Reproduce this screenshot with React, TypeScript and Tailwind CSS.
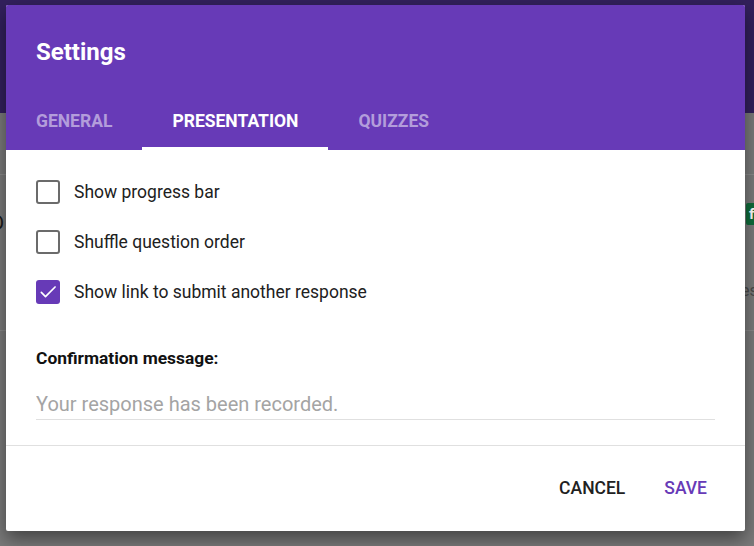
import { useState } from 'react';

const font = { fontFamily: 'Roboto, "Liberation Sans", sans-serif' };

function Checkbox({ checked }: { checked: boolean }) {
  if (checked) {
    return (
      <span className="flex h-[24px] w-[24px] items-center justify-center rounded-[3px] bg-[#673ab7]">
        <svg width="20" height="20" viewBox="0 0 24 24" fill="none">
          <path d="M4 12.5l5 5L20.5 6" stroke="#fff" strokeWidth="2" strokeLinecap="round" strokeLinejoin="round" />
        </svg>
      </span>
    );
  }
  return <span className="block h-[24px] w-[24px] rounded-[3px] border-2 border-[#6b6b6b]" />;
}

export default function App() {
  const [tab] = useState('PRESENTATION');
  const [opts, setOpts] = useState([
    { label: 'Show progress bar', checked: false },
    { label: 'Shuffle question order', checked: false },
    { label: 'Show link to submit another response', checked: true },
  ]);

  const toggle = (i: number) =>
    setOpts((prev) => prev.map((o, j) => (j === i ? { ...o, checked: !o.checked } : o)));

  return (
    <div className="relative h-[546px] w-[754px] overflow-hidden bg-[#7a7a7a]" style={font}>
      {/* dimmed page behind the dialog */}
      <div className="h-[113px] bg-[#32205c]" />
      <div className="mt-[61px] h-px bg-[#8a8a8a]" />
      <div className="mt-[155px] h-px bg-[#888]" />
      <span className="absolute left-[-9px] top-[208px] text-[20px] text-[#1a1a1a]">D</span>
      <span className="absolute left-[746px] top-[203px] flex h-[22px] w-[20px] items-center rounded-[2px] bg-[#0f6b3a] pl-[3px] text-[15px] font-bold text-white">
        f
      </span>
      <span className="absolute left-[741px] top-[279px] text-[16px] text-[#4a4a4a]">es</span>

      {/* dialog */}
      <div className="absolute left-[6px] top-[5px] flex h-[526px] w-[739px] flex-col overflow-hidden rounded-[2px] bg-white shadow-[0_8px_18px_rgba(0,0,0,0.45)]">
        <div className="bg-[#673ab7]">
          <div className="flex h-[90px] items-center pl-[30px] pt-[4px] text-[24px] font-bold text-white">Settings</div>
          <div className="flex h-[55px]">
            {['GENERAL', 'PRESENTATION', 'QUIZZES'].map((t) => (
              <div
                key={t}
                className={
                  t === tab
                    ? 'flex items-center border-b-[3px] border-white px-[30px] text-[17.5px] font-bold text-white'
                    : 'flex items-center border-b-[3px] border-transparent px-[30px] text-[17.5px] font-bold text-[#b39ddb]'
                }
              >
                {t}
              </div>
            ))}
          </div>
        </div>

        <div className="px-[30px] pt-[17px]">
          {opts.map((o, i) => (
            <div key={o.label} className="flex h-[50px] cursor-pointer items-center gap-[14px]" onClick={() => toggle(i)}>
              <Checkbox checked={o.checked} />
              <span className="text-[17.5px] text-[#212121]">{o.label}</span>
            </div>
          ))}

          <div className="mt-[31px] h-[20px] text-[17.4px] font-bold leading-[20px] text-[#111]">Confirmation message:</div>
          <input
            className="mt-[20px] block h-[32px] w-full border-b border-[#e0e0e0] text-[20px] text-[#212121] outline-none placeholder:text-[#a4a4a4]"
            placeholder="Your response has been recorded."
          />
        </div>

        <div className="mt-[25px] flex flex-1 items-center justify-end gap-[39px] border-t border-[#e0e0e0] pr-[38px]">
          <button className="text-[17.5px] font-medium text-[#212121]">CANCEL</button>
          <button className="text-[17.5px] font-medium text-[#673ab7]">SAVE</button>
        </div>
      </div>
    </div>
  );
}
